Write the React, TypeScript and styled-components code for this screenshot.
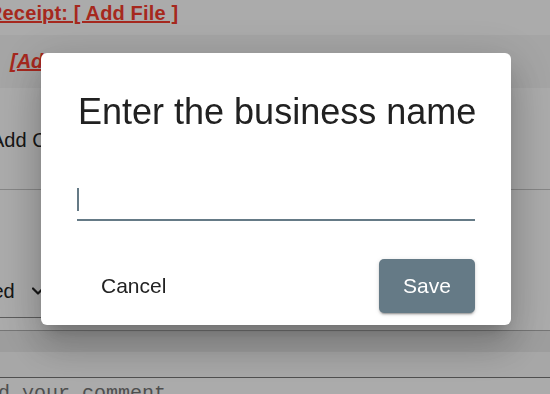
import React from "react";
import styled, { createGlobalStyle } from "styled-components";

const GlobalStyle = createGlobalStyle`
  html, body {
    margin: 0;
    padding: 0;
    width: 550px;
    height: 394px;
    overflow: hidden;
    background: #ffffff;
    font-family: "Liberation Sans", Arial, Helvetica, sans-serif;
  }
  * { box-sizing: border-box; }
`;

/* ---------- underlying page (horizontally scrolled content) ---------- */

const Page = styled.div`
  width: 700px;
  margin-left: -100px;
  display: flex;
  flex-direction: column;
`;

const Row = styled.div<{ $h: number; $bg?: string; $pl: number; $border?: string }>`
  height: ${(p) => p.$h}px;
  background: ${(p) => p.$bg || "#ffffff"};
  padding-left: ${(p) => p.$pl}px;
  display: flex;
  align-items: center;
  border-bottom: ${(p) => p.$border || "none"};
`;

const TopRow = styled(Row)`
  align-items: flex-start;
  padding-top: 2px;
`;

const FileLink = styled.a<{ $italic?: boolean }>`
  font-size: 20px;
  font-weight: bold;
  font-style: ${(p) => (p.$italic ? "italic" : "normal")};
  color: #f83c2e;
  text-decoration: underline;
  white-space: nowrap;
  letter-spacing: ${(p) => (p.$italic ? "0" : "0.15px")};
`;

const PlainText = styled.span`
  font-size: 20px;
  color: #222;
  white-space: nowrap;
  padding-top: 4px;
`;

const SelectRow = styled(Row)`
  align-items: flex-end;
  padding-bottom: 12px;
`;

const SelectBox = styled.div`
  height: 53px;
  display: flex;
  align-items: center;
  gap: 17px;
  font-size: 20px;
  color: #222;
  border-bottom: 1px solid #8a8a8a;
  padding-right: 12px;
  white-space: nowrap;
`;

const Band = styled.div<{ $h: number; $bg: string; $top?: string }>`
  height: ${(p) => p.$h}px;
  background: ${(p) => p.$bg};
  border-top: ${(p) => p.$top || "none"};
`;

const CommentRow = styled.div`
  padding-left: 71px;
`;

const Comment = styled.textarea`
  width: 640px;
  height: 80px;
  border: 1px solid #767676;
  padding: 4px 2px;
  font-family: "Liberation Mono", "Courier New", monospace;
  font-size: 20px;
  resize: none;
  display: block;
  &::placeholder { color: #757575; }
`;

/* ---------- modal ---------- */

const Overlay = styled.div`
  position: fixed;
  inset: 0;
  background: rgba(0, 0, 0, 0.33);
  display: flex;
  justify-content: center;
  align-items: flex-start;
  padding-top: 53px;
  padding-left: 2px;
`;

const Dialog = styled.div`
  width: 470px;
  background: #ffffff;
  border-radius: 6px;
  padding: 38px 36px 12px 36px;
  box-shadow: 0px 11px 15px -7px rgba(0, 0, 0, 0.2),
    0px 24px 38px 3px rgba(0, 0, 0, 0.14),
    0px 9px 46px 8px rgba(0, 0, 0, 0.12);
  display: flex;
  flex-direction: column;
`;

const Title = styled.h2`
  margin: 0;
  font-size: 36px;
  line-height: 41px;
  font-weight: normal;
  color: #212121;
  white-space: nowrap;
  padding-left: 1px;
`;

const Field = styled.div`
  position: relative;
  margin-top: 45px;
`;

const Input = styled.input`
  width: 100%;
  height: 44px;
  border: none;
  border-bottom: 2px solid #657a86;
  outline: none;
  padding: 0;
  font-family: "Liberation Sans", Arial, sans-serif;
  font-size: 20px;
  color: #212121;
  background: transparent;
`;

const Caret = styled.span`
  position: absolute;
  left: 0;
  top: 11px;
  width: 2px;
  height: 23px;
  background: #657a86;
`;

const Actions = styled.div`
  margin-top: 38px;
  display: flex;
  justify-content: space-between;
  align-items: center;
`;

const Button = styled.button<{ $primary?: boolean }>`
  height: 54px;
  padding: 0 ${(p) => (p.$primary ? "24px" : "23px")};
  border: none;
  border-radius: 5px;
  font-family: "Liberation Sans", Arial, sans-serif;
  font-size: 21px;
  cursor: pointer;
  background: ${(p) => (p.$primary ? "#657a86" : "transparent")};
  color: ${(p) => (p.$primary ? "#ffffff" : "#222222")};
  box-shadow: ${(p) =>
    p.$primary
      ? "0 3px 1px -2px rgba(0,0,0,0.2), 0 2px 2px 0 rgba(0,0,0,0.14), 0 1px 5px 0 rgba(0,0,0,0.12)"
      : "none"};
  min-width: ${(p) => (p.$primary ? "96px" : "auto")};
  margin-left: ${(p) => (p.$primary ? "0" : "1px")};
`;

const Chevron = () => (
  <svg width="12" height="8" viewBox="0 0 12 8" fill="none">
    <path d="M1 1.5 L6 6.5 L11 1.5" stroke="#222" strokeWidth="2.2" strokeLinecap="round" strokeLinejoin="round" />
  </svg>
);

export default function App() {
  return (
    <>
      <GlobalStyle />
      <Page>
        <TopRow $h={35} $pl={88}>
          <FileLink href="#">Receipt: [ Add File ]</FileLink>
        </TopRow>
        <Row $h={53} $bg="#f6f6f6" $pl={110}>
          <FileLink href="#" $italic>[Add Tag]</FileLink>
        </Row>
        <Row $h={102} $pl={91} $border="1px solid #c8c8c8">
          <PlainText>Add Comment</PlainText>
        </Row>
        <SelectRow $h={140} $pl={9}>
          <SelectBox>
            <span>Unassigned</span>
            <Chevron />
          </SelectBox>
        </SelectRow>
        <Band $h={22} $bg="#ebebeb" $top="1px solid #b0b0b0" />
        <Band $h={25} $bg="#fafafa" />
        <CommentRow>
          <Comment placeholder="Add your comment" />
        </CommentRow>
      </Page>

      <Overlay>
        <Dialog role="dialog">
          <Title>Enter the business name</Title>
          <Field>
            <Input type="text" aria-label="Business name" />
            <Caret />
          </Field>
          <Actions>
            <Button>Cancel</Button>
            <Button $primary>Save</Button>
          </Actions>
        </Dialog>
      </Overlay>
    </>
  );
}
